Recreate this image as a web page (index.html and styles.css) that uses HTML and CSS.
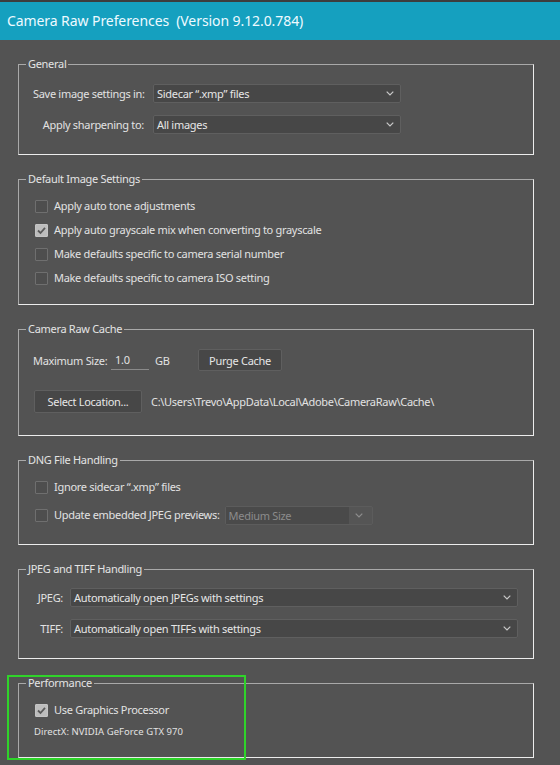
FILE: index.html
```html
<!DOCTYPE html>
<html>
<head>
<meta charset="utf-8">
<title>Camera Raw Preferences</title>
<link rel="stylesheet" href="styles.css">
</head>
<body>
<div class="titlebar"><span class="title-text">Camera Raw Preferences&nbsp; (Version 9.12.0.784)</span></div>
<main class="content">

  <fieldset class="group">
    <legend>General</legend>
    <div class="body general">
      <span class="lbl">Save image settings in:</span>
      <div class="select w248"><span class="val">Sidecar “.xmp” files</span><svg class="chev" width="8" height="5" viewBox="0 0 8 5"><polyline points="0.7,0.7 4,4 7.3,0.7" /></svg></div>
      <span class="lbl">Apply sharpening to:</span>
      <div class="select w248"><span class="val">All images</span><svg class="chev" width="8" height="5" viewBox="0 0 8 5"><polyline points="0.7,0.7 4,4 7.3,0.7" /></svg></div>
    </div>
  </fieldset>

  <fieldset class="group">
    <legend>Default Image Settings</legend>
    <div class="body defaults">
      <div class="check-row"><span class="box"></span><span>Apply auto tone adjustments</span></div>
      <div class="check-row"><span class="box checked"><svg width="13" height="13" viewBox="0 0 13 13"><polyline points="3,6.5 5.5,9 10,3.8" /></svg></span><span>Apply auto grayscale mix when converting to grayscale</span></div>
      <div class="check-row"><span class="box"></span><span>Make defaults specific to camera serial number</span></div>
      <div class="check-row"><span class="box"></span><span>Make defaults specific to camera ISO setting</span></div>
    </div>
  </fieldset>

  <fieldset class="group">
    <legend>Camera Raw Cache</legend>
    <div class="body cache">
      <div class="cache-row1">
        <span class="size-lbl">Maximum Size:</span>
        <span class="num-input">1.0</span>
        <span class="unit">GB</span>
        <span class="button purge">Purge Cache</span>
      </div>
      <div class="cache-row2">
        <span class="button locate">Select Location...</span>
        <span class="path">C:\Users\Trevo\AppData\Local\Adobe\CameraRaw\Cache\</span>
      </div>
    </div>
  </fieldset>

  <fieldset class="group">
    <legend>DNG File Handling</legend>
    <div class="body dng">
      <div class="check-row"><span class="box"></span><span>Ignore sidecar “.xmp” files</span></div>
      <div class="check-row"><span class="box"></span><span>Update embedded JPEG previews:</span>
        <div class="select disabled"><span class="val">Medium Size</span><span class="arrow-part"><svg class="chev" width="8" height="5" viewBox="0 0 8 5"><polyline points="0.7,0.7 4,4 7.3,0.7" /></svg></span></div>
      </div>
    </div>
  </fieldset>

  <fieldset class="group">
    <legend>JPEG and TIFF Handling</legend>
    <div class="body jpeg">
      <span class="lbl">JPEG:</span>
      <div class="select w448"><span class="val">Automatically open JPEGs with settings</span><svg class="chev" width="8" height="5" viewBox="0 0 8 5"><polyline points="0.7,0.7 4,4 7.3,0.7" /></svg></div>
      <span class="lbl">TIFF:</span>
      <div class="select w448"><span class="val">Automatically open TIFFs with settings</span><svg class="chev" width="8" height="5" viewBox="0 0 8 5"><polyline points="0.7,0.7 4,4 7.3,0.7" /></svg></div>
    </div>
  </fieldset>

  <fieldset class="group perf">
    <legend>Performance</legend>
    <div class="body performance">
      <div class="check-row"><span class="box checked"><svg width="13" height="13" viewBox="0 0 13 13"><polyline points="3,6.5 5.5,9 10,3.8" /></svg></span><span>Use Graphics Processor</span></div>
      <div class="gpu">DirectX: NVIDIA GeForce GTX 970</div>
    </div>
    <div class="highlight"></div>
  </fieldset>

</main>
</body>
</html>
```

FILE: styles.css
```css
* { box-sizing: border-box; }

html, body {
  margin: 0;
  padding: 0;
  background: #535353;
}

body {
  width: 560px;
  height: 765px;
  overflow: hidden;
  font-family: "Noto Sans", "Open Sans", sans-serif;
  font-size: 11px;
  letter-spacing: -0.3px;
  color: #e2e2e2;
  border-top: 2px solid #3d3d3d;
}

.titlebar {
  height: 38px;
  background: #15a0bf;
  display: flex;
  align-items: center;
  padding-left: 7px;
}

.title-text {
  font-size: 14px;
  letter-spacing: -0.08px;
  color: #eefaff;
  margin-top: -2px;
}

.content {
  padding-top: 17px;
}

.group {
  position: relative;
  margin: 0 0 17px 18px;
  width: 516px;
  padding: 0;
  border-style: solid;
  border-width: 1px;
  border-color: #a9a9a9 #ececec #ececec #a9a9a9;
  min-inline-size: 0;
}

.group legend {
  margin-left: 7px;
  padding: 0 2px;
  line-height: 14px;
  height: 14px;
  font-size: 11px;
  color: #e4e4e4;
}

.body {
  padding-left: 14px;
}

/* General */
.general {
  display: grid;
  grid-template-columns: 111px 248px;
  column-gap: 9px;
  row-gap: 12px;
  padding-top: 13px;
  padding-bottom: 20px;
  align-items: center;
}

.lbl {
  text-align: right;
  white-space: nowrap;
}

.select {
  height: 19px;
  background: #474747;
  border: 1px solid #5f5f5f;
  border-radius: 2px;
  display: flex;
  align-items: center;
  justify-content: space-between;
  padding: 0 4px 0 3px;
  color: #e6e6e6;
}

.select .val {
  white-space: nowrap;
}

.chev {
  display: block;
  margin-right: 2px;
}

.chev polyline {
  fill: none;
  stroke: #c9c9c9;
  stroke-width: 1.2;
}

.w248 { width: 248px; }
.w448 { width: 448px; }

/* checkboxes */
.defaults {
  padding-left: 16px;
  padding-top: 8px;
  padding-bottom: 14px;
}

.check-row {
  height: 24px;
  display: flex;
  align-items: center;
  white-space: nowrap;
}

.check-row > span:last-of-type {
  margin-top: -1px;
}

.box {
  width: 13px;
  height: 13px;
  border: 1px solid #6f6f6f;
  background: #4e4e4e;
  border-radius: 1px;
  margin-right: 6px;
  flex: none;
  display: block;
}

.box.checked {
  background: #bdbdbd;
  border-color: #c4c4c4;
}

.box svg {
  display: block;
  margin: -1px;
}

.box svg polyline {
  fill: none;
  stroke: #5a5a5a;
  stroke-width: 1.8;
}

/* Cache */
.cache {
  padding-top: 13px;
  padding-bottom: 22px;
}

.cache-row1 {
  display: flex;
  align-items: center;
  height: 22px;
}

.size-lbl {
  width: 78px;
  flex: none;
  white-space: nowrap;
}

.num-input {
  width: 38px;
  height: 20px;
  flex: none;
  padding-left: 4px;
  border-bottom: 1px solid #8a8a8a;
  display: flex;
  align-items: center;
}

.unit {
  width: 49px;
  flex: none;
  padding-left: 6px;
}

.button {
  display: flex;
  align-items: center;
  justify-content: center;
  background: #474747;
  border: 1px solid #5f5f5f;
  border-radius: 2px;
  color: #e6e6e6;
  white-space: nowrap;
}

.purge {
  width: 84px;
  height: 22px;
}

.cache-row2 {
  display: flex;
  align-items: center;
  margin-top: 19px;
  height: 23px;
}

.locate {
  width: 108px;
  height: 23px;
  margin-left: 1px;
}

.path {
  margin-left: 9px;
  white-space: nowrap;
}

/* DNG */
.dng {
  padding-left: 16px;
  padding-top: 10px;
  padding-bottom: 19px;
}

.dng .check-row {
  height: 20px;
}

.dng .check-row + .check-row {
  margin-top: 8px;
}

.select.disabled {
  width: 148px;
  height: 19px;
  margin-left: 5px;
  padding: 0;
  background: #555555;
  border-color: #5c5c5c;
  color: #8c8c8c;
}

.select.disabled .val {
  flex: 1;
  height: 100%;
  background: #4a4a4a;
  padding-left: 3px;
  display: flex;
  align-items: center;
}

.arrow-part {
  width: 23px;
  display: flex;
  justify-content: center;
}

.arrow-part .chev polyline {
  stroke: #8e8e8e;
}

/* JPEG */
.jpeg {
  display: grid;
  grid-template-columns: 30px 448px;
  column-gap: 7px;
  row-gap: 12px;
  padding-top: 12px;
  padding-bottom: 20px;
  align-items: center;
}

/* Performance */
.performance {
  padding-left: 16px;
  padding-top: 10px;
  padding-bottom: 19px;
}

.performance .check-row {
  height: 20px;
}

.gpu {
  margin-top: 6px;
  height: 12px;
  line-height: 12px;
  font-size: 9.5px;
  letter-spacing: 0.05px;
  margin-left: -1px;
}

.highlight {
  position: absolute;
  left: -12px;
  top: -15px;
  width: 239px;
  height: 85px;
  border: 2px solid #2fd32a;
  pointer-events: none;
}
```
